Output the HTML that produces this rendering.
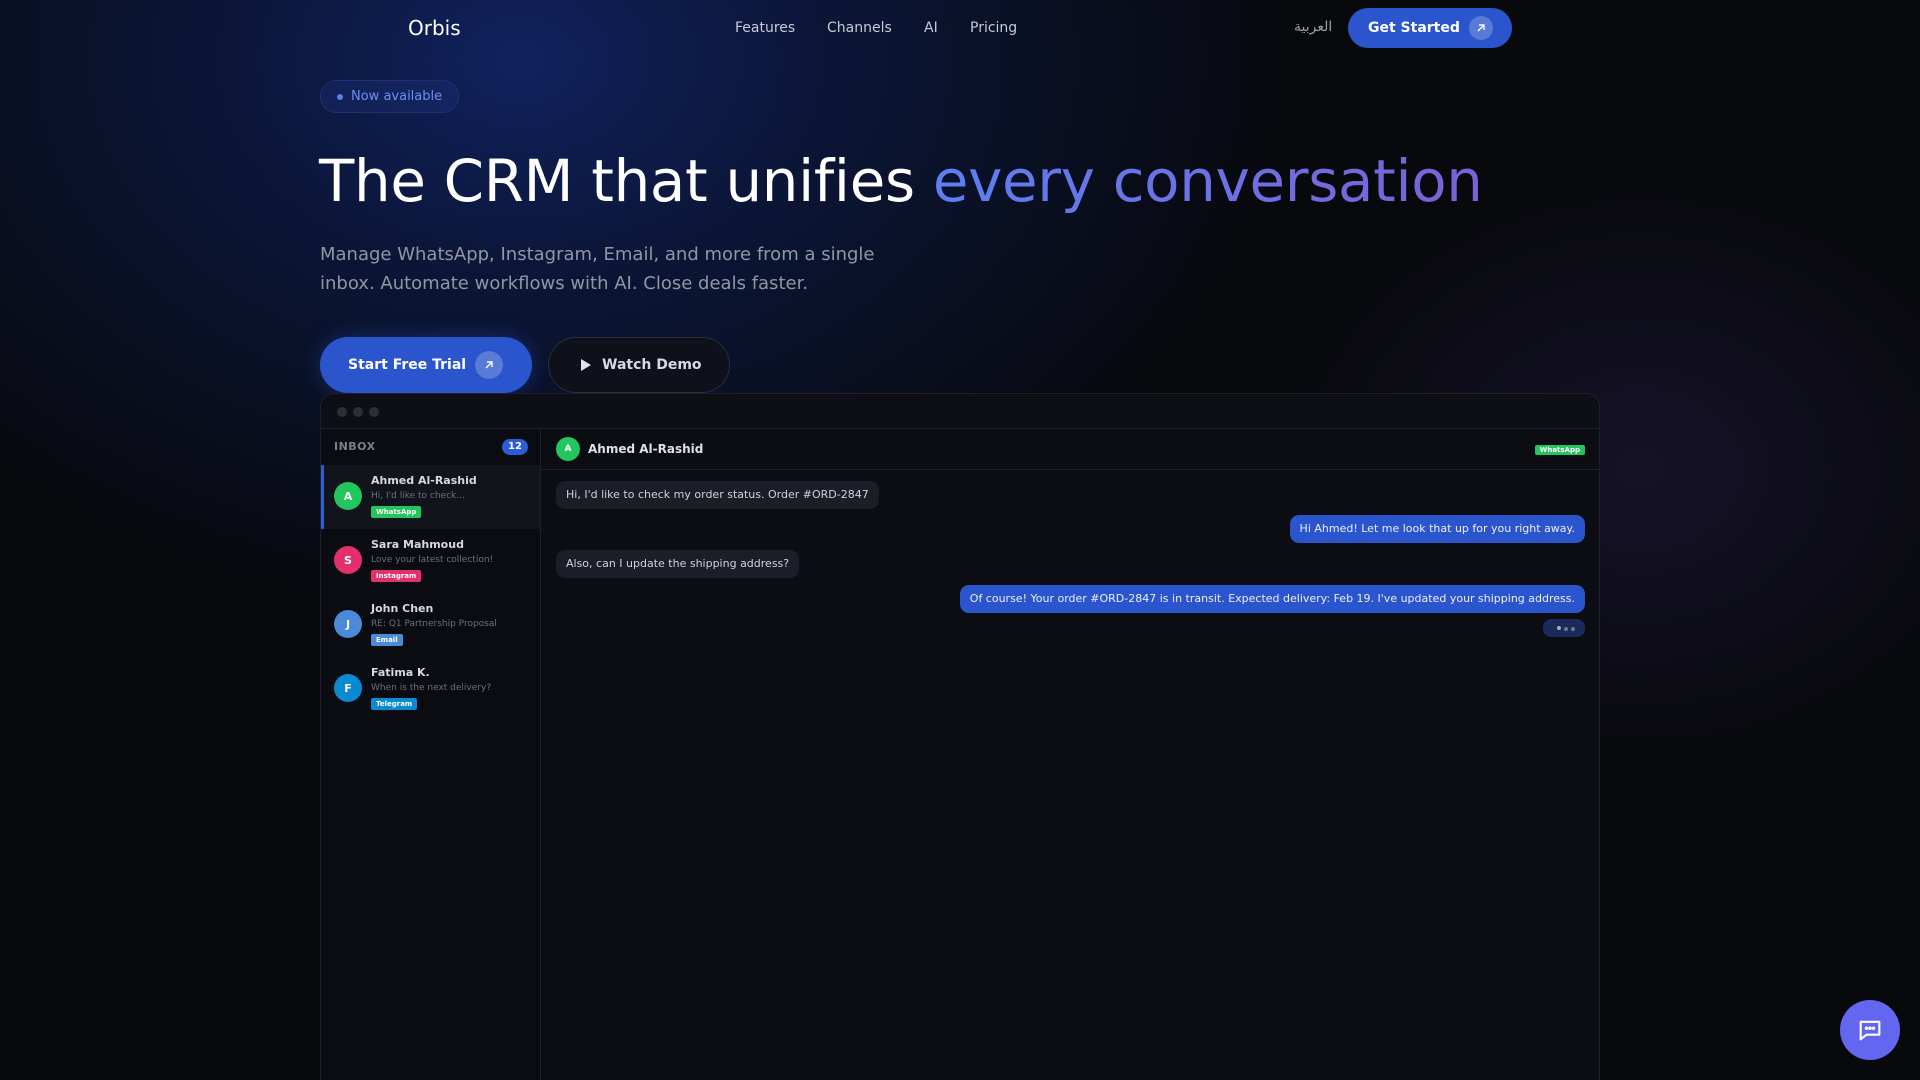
<!DOCTYPE html>
<html style="overflow:hidden"><head><meta charset="utf-8"><style>
*{box-sizing:border-box;margin:0;padding:0}
html,body{width:1920px;height:1080px;overflow:hidden}
body{font-family:"DejaVu Sans","Liberation Sans",sans-serif;color:#fff;
background:radial-gradient(ellipse 520px 420px at 1640px 470px,rgba(70,50,140,.22),transparent 70%),
radial-gradient(ellipse 780px 560px at 520px 60px,#10225e 0%,#0b1536 40%,rgba(10,14,30,0) 100%),#08090d;position:relative}
.a{position:absolute}
.nav a{position:absolute;top:20px;font-size:14px;color:#c7cbd4}
.btn{position:absolute;border-radius:30px;background:#2b55cc;color:#fff;font-weight:bold;display:flex;align-items:center}
.arr{width:24px;height:24px;border-radius:50%;background:rgba(255,255,255,.22);display:flex;align-items:center;justify-content:center;margin-left:9px}
.win{left:320px;top:393px;width:1280px;height:687px;background:#0b0d12;border:1px solid #1d2029;border-bottom:none;border-radius:14px 14px 0 0;overflow:hidden}
.item{position:absolute;left:0;width:219px;height:64px}
.av{position:absolute;border-radius:50%;color:#fff;font-weight:bold;display:flex;align-items:center;justify-content:center}
.nm{position:absolute;left:50px;top:9px;font-size:11px;font-weight:bold;color:#d6d9e0}
.pv{position:absolute;left:50px;top:26px;font-size:9px;color:#6b7080}
.tg{position:absolute;left:50px;top:41px;font-size:7px;font-weight:bold;color:#fff;padding:2px 5px;border-radius:2px}
.b{position:absolute;font-size:11px;padding:0 10px;height:28px;line-height:28px;border-radius:9px;white-space:nowrap}
.in{background:#1b1e26;color:#d0d3da}
.out{background:#2b55cc;color:#eef}
</style></head><body>
<div class="a" style="left:408px;top:16px;font-size:20px;color:#fff">Orbis</div>
<div class="nav"><a style="left:735px">Features</a><a style="left:827px">Channels</a><a style="left:924px">AI</a><a style="left:970px">Pricing</a></div>
<div class="a" style="left:1294px;top:19px;font-size:14px;color:#9aa0ab">العربية</div>
<div class="btn" style="left:1348px;top:8px;width:164px;height:40px;padding-left:20px;font-size:14px">Get Started<span class="arr"><svg width="12" height="12" viewBox="0 0 12 12"><path d="M3 9L9 3M4 3h5v5" stroke="#fff" stroke-width="1.4" fill="none"/></svg></span></div>

<div class="a" style="left:320px;top:80px;width:139px;height:33px;border-radius:17px;border:1px solid #1e3270;background:rgba(30,50,120,.35);color:#6c8ff0;font-size:13px;line-height:32px;padding-left:30px">Now available</div>
<div class="a" style="left:337px;top:94px;width:6px;height:6px;border-radius:50%;background:#5b7fe8"></div>

<div class="a" style="left:319px;top:147px;font-size:57.8px;white-space:nowrap;letter-spacing:-.3px">The CRM that unifies <span style="background:linear-gradient(90deg,#5d7ff0,#7a62d6);-webkit-background-clip:text;color:transparent">every conversation</span></div>
<div class="a" style="left:320px;top:240px;font-size:18px;line-height:29px;color:#9097a3;width:600px">Manage WhatsApp, Instagram, Email, and more from a single inbox. Automate workflows with AI. Close deals faster.</div>

<div class="btn" style="left:320px;top:337px;width:212px;height:56px;padding-left:28px;font-size:14px;box-shadow:0 0 20px rgba(43,85,204,.4)">Start Free Trial<span class="arr" style="width:28px;height:28px"><svg width="12" height="12" viewBox="0 0 12 12"><path d="M3 9L9 3M4 3h5v5" stroke="#fff" stroke-width="1.4" fill="none"/></svg></span></div>
<div class="btn" style="left:548px;top:337px;width:182px;height:56px;background:#0e111a;border:1px solid #2a2e3a;padding-left:31px;font-size:14px;color:#d8dbe2"><svg width="12" height="14" viewBox="0 0 12 14" style="margin-right:10px"><path d="M1 1L11 7L1 13Z" fill="#e0e3ea"/></svg>Watch Demo</div>

<div class="a win">
 <div class="a" style="left:0;top:0;width:1280px;height:35px;border-bottom:1px solid #1d2029;background:#0d0f14"></div>
 <div class="a" style="left:16px;top:13px;width:10px;height:10px;border-radius:50%;background:#2c2f38"></div>
 <div class="a" style="left:32px;top:13px;width:10px;height:10px;border-radius:50%;background:#2c2f38"></div>
 <div class="a" style="left:48px;top:13px;width:10px;height:10px;border-radius:50%;background:#2c2f38"></div>
 <div class="a" style="left:0;top:35px;width:220px;height:700px;border-right:1px solid #1d2029;background:#0a0c11">
  <div class="a" style="left:13px;top:11px;font-size:11px;font-weight:bold;color:#7a7f8c;letter-spacing:.5px">INBOX</div>
  <div class="a" style="left:181px;top:10px;width:26px;height:16px;border-radius:8px;background:#2e5bd6;font-size:10px;font-weight:bold;text-align:center;line-height:16px">12</div>
  <div class="item" style="top:36px;background:#11141b;border-left:3px solid #2e5bd6"><div class="av" style="left:10px;top:17px;width:28px;height:28px;background:#22c55e;font-size:11px">A</div><div class="nm" style="left:47px">Ahmed Al-Rashid</div><div class="pv" style="left:47px">Hi, I'd like to check...</div><div class="tg" style="left:47px;background:#22c55e">WhatsApp</div></div>
  <div class="item" style="top:100px"><div class="av" style="left:13px;top:17px;width:28px;height:28px;background:#e1306c;font-size:11px">S</div><div class="nm">Sara Mahmoud</div><div class="pv">Love your latest collection!</div><div class="tg" style="background:#e1306c">Instagram</div></div>
  <div class="item" style="top:164px"><div class="av" style="left:13px;top:17px;width:28px;height:28px;background:#4a8ad8;font-size:11px">J</div><div class="nm">John Chen</div><div class="pv">RE: Q1 Partnership Proposal</div><div class="tg" style="background:#4a8ad8">Email</div></div>
  <div class="item" style="top:228px"><div class="av" style="left:13px;top:17px;width:28px;height:28px;background:#0a8ad0;font-size:11px">F</div><div class="nm">Fatima K.</div><div class="pv">When is the next delivery?</div><div class="tg" style="background:#0a8ad0">Telegram</div></div>
 </div>
 <div class="a" style="left:220px;top:35px;width:1060px;height:41px;border-bottom:1px solid #1d2029"></div>
 <div class="av" style="left:235px;top:43px;width:24px;height:24px;background:#22c55e;font-size:9px">A</div>
 <div class="a" style="left:267px;top:48px;font-size:12px;font-weight:bold;color:#dde0e6">Ahmed Al-Rashid</div>
 <div class="a" style="right:14px;top:51px;font-size:7px;font-weight:bold;background:#22c55e;padding:1px 5px;border-radius:2px">WhatsApp</div>
 <div class="b in" style="left:235px;top:87px">Hi, I'd like to check my order status. Order #ORD-2847</div>
 <div class="b out" style="right:14px;top:121px">Hi Ahmed! Let me look that up for you right away.</div>
 <div class="b in" style="left:235px;top:156px">Also, can I update the shipping address?</div>
 <div class="b out" style="right:14px;top:191px">Of course! Your order #ORD-2847 is in transit. Expected delivery: Feb 19. I've updated your shipping address.</div>
 <div class="a" style="right:14px;top:225px;width:42px;height:18px;border-radius:8px;background:#1a2a5c"></div>
 <div class="a" style="left:1236px;top:232px;width:4px;height:4px;border-radius:50%;background:#aab"></div>
 <div class="a" style="left:1243px;top:233px;width:4px;height:4px;border-radius:50%;background:#778"></div>
 <div class="a" style="left:1250px;top:233px;width:4px;height:4px;border-radius:50%;background:#778"></div>
</div>

<div class="a" style="left:1840px;top:1000px;width:60px;height:60px;border-radius:50%;background:#6366f1;display:flex;align-items:center;justify-content:center">
<svg width="28" height="28" viewBox="0 0 24 24" fill="none" stroke="#fff" stroke-width="1.8" stroke-linejoin="round"><path d="M4 5h16v11H9l-5 4z"/><circle cx="9" cy="10.5" r=".6" fill="#fff"/><circle cx="12" cy="10.5" r=".6" fill="#fff"/><circle cx="15" cy="10.5" r=".6" fill="#fff"/></svg></div>
</body></html>
